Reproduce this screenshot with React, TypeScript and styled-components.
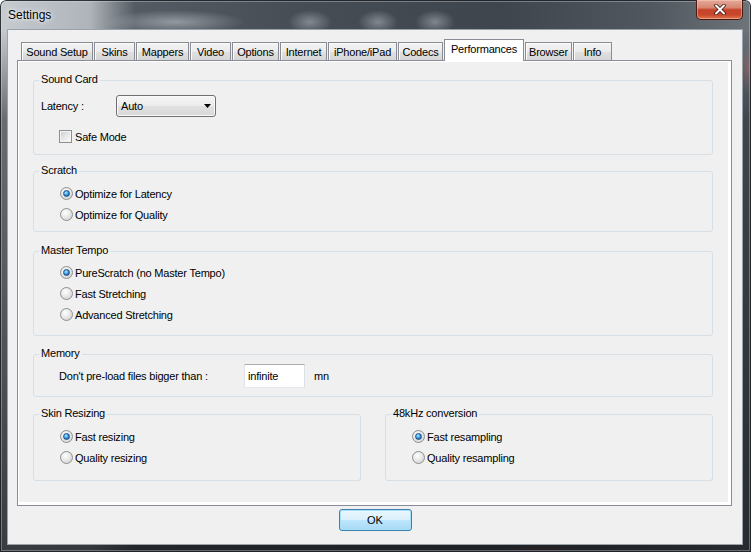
import styled, { createGlobalStyle } from "styled-components";

const GlobalStyle = createGlobalStyle`
  html, body {
    margin: 0;
    padding: 0;
  }
  body {
    width: 751px;
    height: 552px;
    overflow: hidden;
    font-family: "Liberation Sans", Arial, sans-serif;
  }
`;

const Window = styled.div`
  width: 751px;
  height: 552px;
  box-sizing: border-box;
  display: flex;
  flex-direction: column;
  border-radius: 6px 6px 0 0;
  box-shadow: inset 0 0 0 1px rgba(20, 24, 28, 0.85), inset 0 0 0 2px rgba(220, 226, 232, 0.35);
  background:
    linear-gradient(180deg, rgba(0, 0, 0, 0) 0px, rgba(0, 0, 0, 0) 30px, rgba(28, 32, 37, 0.55) 120px, rgba(22, 25, 29, 0.8) 100%),
    radial-gradient(ellipse 70px 12px at 175px 22px, rgba(200, 206, 212, 0.55), rgba(0, 0, 0, 0)),
    radial-gradient(ellipse 22px 12px at 310px 22px, rgba(190, 196, 204, 0.5), rgba(0, 0, 0, 0)),
    radial-gradient(ellipse 20px 12px at 378px 22px, rgba(190, 196, 204, 0.5), rgba(0, 0, 0, 0)),
    radial-gradient(ellipse 20px 12px at 435px 22px, rgba(190, 196, 204, 0.5), rgba(0, 0, 0, 0)),
    radial-gradient(ellipse 6px 24px at 748px 70px, rgba(200, 120, 120, 0.6), rgba(0, 0, 0, 0)),
    radial-gradient(ellipse 40px 5px at 540px 549px, rgba(160, 60, 60, 0.5), rgba(0, 0, 0, 0)),
    linear-gradient(90deg, #c6cbd0 0px, #aeb4ba 90px, #545b62 135px, #474d54 300px, #3f454c 500px, #50575e 650px, #6d747a 751px);
`;

const TitleBar = styled.div`
  height: 29px;
  flex: none;
  display: flex;
  align-items: flex-start;
  justify-content: space-between;
  padding: 0 8px;
`;

const Title = styled.span`
  margin-top: 8px;
  font-family: "Liberation Sans", Arial, sans-serif;
  font-size: 12px;
  line-height: 14px;
  color: #000;
  text-shadow: 0 0 6px rgba(255, 255, 255, 0.9), 0 0 3px rgba(255, 255, 255, 0.8);
`;

const CloseButton = styled.div`
  width: 47px;
  height: 20px;
  box-sizing: border-box;
  border: 1px solid #4a1a12;
  border-top: none;
  border-radius: 0 0 5px 5px;
  display: flex;
  align-items: center;
  justify-content: center;
  background: linear-gradient(180deg, #e3ab9c 0%, #d88670 40%, #c4432a 52%, #c9472c 78%, #e0794d 100%);
  box-shadow: inset 0 0 0 1px rgba(255, 210, 190, 0.45);
`;

const Client = styled.div`
  flex: 1;
  margin: 0 8px 7px 7px;
  box-sizing: border-box;
  border: 1px solid #9aa1a8;
  background: #f0f0f0;
  display: flex;
  flex-direction: column;
  padding-top: 9px;
  font-size: 11px;
  letter-spacing: -0.2px;
  color: #000;
`;

const TabRow = styled.div`
  height: 21px;
  display: flex;
  align-items: flex-end;
  margin-left: 13px;
`;

const Tab = styled.div<{ $w: number; $active?: boolean }>`
  width: ${(p) => p.$w}px;
  height: ${(p) => (p.$active ? 22 : 18)}px;
  margin-right: 1px;
  margin-bottom: ${(p) => (p.$active ? -1 : 0)}px;
  box-sizing: border-box;
  border: 1px solid #898c95;
  border-bottom: none;
  display: flex;
  align-items: center;
  justify-content: center;
  padding-bottom: ${(p) => (p.$active ? 3 : 0)}px;
  position: relative;
  z-index: ${(p) => (p.$active ? 1 : 0)};
  background: ${(p) =>
    p.$active
      ? "#ffffff"
      : "linear-gradient(180deg, #f3f3f3 0%, #ebebeb 50%, #e0e0e0 51%, #d6d6d6 100%)"};
  box-shadow: ${(p) => (p.$active ? "none" : "inset 1px 1px 0 #fbfbfb")};
  white-space: nowrap;
`;

const Panel = styled.div`
  width: 715px;
  height: 446px;
  margin-left: 9px;
  box-sizing: border-box;
  border: 1px solid #898c95;
  background: #f0f0f0;
  box-shadow: inset 1px 1px 0 #ffffff, inset -3px -3px 0 #ffffff;
  padding: 19px 18px 0 15px;
  display: flex;
  flex-direction: column;
`;

const Group = styled.div<{ $h: number; $mt?: number }>`
  height: ${(p) => p.$h}px;
  margin-top: ${(p) => p.$mt ?? 0}px;
  flex: none;
  box-sizing: border-box;
  border: 1px solid #d5dfe5;
  border-radius: 3px;
`;

const HalfGroup = styled(Group)`
  flex: 1;
`;

const Legend = styled.div`
  display: table;
  margin: -8px 0 0 5px;
  padding: 0 2px;
  background: #f0f0f0;
  line-height: 13px;
`;

const Body = styled.div<{ $mt: number; $pl: number }>`
  margin-top: ${(p) => p.$mt}px;
  padding-left: ${(p) => p.$pl}px;
  display: flex;
  flex-direction: column;
`;

const Row = styled.div`
  display: flex;
  align-items: center;
`;

const BottomRow = styled.div`
  display: flex;
  gap: 24px;
  margin-top: 17px;
`;

const FieldLabel = styled.span<{ $w: number }>`
  width: ${(p) => p.$w}px;
  flex: none;
`;

const ComboBox = styled.div`
  width: 100px;
  height: 22px;
  box-sizing: border-box;
  border: 1px solid #707070;
  border-radius: 3px;
  display: flex;
  align-items: center;
  justify-content: space-between;
  padding: 0 4px 0 4px;
  background: linear-gradient(180deg, #f6f6f6 0%, #ececec 50%, #e1e1e1 51%, #d8d8d8 100%);
  box-shadow: inset 0 0 0 1px #fafafa;
`;

const CheckRow = styled(Row)`
  margin-top: 13px;
  padding-left: 25px;
  gap: 3px;
`;

const CheckMark = styled.span`
  width: 13px;
  height: 13px;
  box-sizing: border-box;
  border: 1px solid #8e8f8f;
  background: linear-gradient(135deg, #c9cbce 0%, #e6e7e8 50%, #fbfbfb 100%);
  box-shadow: inset 0 0 0 1px #f4f4f4;
`;

const Option = styled.div`
  height: 21px;
  display: flex;
  align-items: center;
  gap: 2px;
`;

const RadioMark = styled.span<{ $checked?: boolean }>`
  width: 13px;
  height: 13px;
  box-sizing: border-box;
  border-radius: 50%;
  border: 1px solid #8e8f8f;
  background: radial-gradient(circle at 40% 35%, #ffffff 0%, #eeeeee 35%, #cbcbcb 100%);
  display: flex;
  align-items: center;
  justify-content: center;

  &::after {
    content: "";
    display: ${(p) => (p.$checked ? "block" : "none")};
    width: 7px;
    height: 7px;
    box-sizing: border-box;
    border-radius: 50%;
    border: 1px solid #1b4f85;
    background: radial-gradient(circle at 40% 35%, #c4ecff 0%, #4aa8e8 40%, #1464b0 80%, #0c4580 100%);
  }
`;

const TextBox = styled.input`
  width: 61px;
  height: 24px;
  box-sizing: border-box;
  margin: 0;
  padding: 0 3px;
  border: 1px solid;
  border-color: #abadb3 #dbdfe6 #e3e9ef #e2e3ea;
  background: #ffffff;
  font-family: "Liberation Sans", Arial, sans-serif;
  font-size: 11px;
  letter-spacing: -0.2px;
  color: #000;
  outline: none;
`;

const Unit = styled.span`
  margin-left: 9px;
`;

const Footer = styled.div`
  flex: 1;
  display: flex;
  justify-content: center;
  align-items: flex-start;
  padding-top: 3px;
`;

const OkButton = styled.button`
  width: 73px;
  height: 22px;
  box-sizing: border-box;
  margin: 0;
  padding: 0;
  border: 1px solid #3c7fb1;
  border-radius: 3px;
  font-family: "Liberation Sans", Arial, sans-serif;
  font-size: 11px;
  color: #000;
  background: linear-gradient(180deg, #eaf6fd 0%, #d9f0fc 50%, #bee6fd 51%, #a7d9f5 100%);
  box-shadow: inset 0 0 0 1px #a8e2f8;
`;

const tabs = [
  { label: "Sound Setup", w: 72 },
  { label: "Skins", w: 41 },
  { label: "Mappers", w: 53 },
  { label: "Video", w: 41 },
  { label: "Options", w: 47 },
  { label: "Internet", w: 47 },
  { label: "iPhone/iPad", w: 69 },
  { label: "Codecs", w: 45 },
  { label: "Performances", w: 80, active: true },
  { label: "Browser", w: 47 },
  { label: "Info", w: 39 },
];

function Radio(props: { label: string; checked?: boolean }) {
  return (
    <Option>
      <RadioMark $checked={props.checked} />
      <span>{props.label}</span>
    </Option>
  );
}

function CloseGlyph() {
  return (
    <svg width="12" height="11" viewBox="0 0 12 11">
      <path d="M2 1.5 L10 9.5 M10 1.5 L2 9.5" stroke="#3a1610" strokeWidth="3.6" strokeLinecap="round" />
      <path d="M2 1.5 L10 9.5 M10 1.5 L2 9.5" stroke="#ffffff" strokeWidth="2" strokeLinecap="round" />
    </svg>
  );
}

function App() {
  return (
    <>
      <GlobalStyle />
      <Window>
        <TitleBar>
          <Title>Settings</Title>
          <CloseButton>
            <CloseGlyph />
          </CloseButton>
        </TitleBar>
        <Client>
          <TabRow>
            {tabs.map((t) => (
              <Tab key={t.label} $w={t.w} $active={t.active}>
                {t.label}
              </Tab>
            ))}
          </TabRow>
          <Panel>
            <Group $h={75}>
              <Legend>Sound Card</Legend>
              <Body $mt={9} $pl={7}>
                <Row>
                  <FieldLabel $w={75}>Latency :</FieldLabel>
                  <ComboBox>
                    <span>Auto</span>
                    <svg width="7" height="4" viewBox="0 0 7 4">
                      <polygon points="0,0 7,0 3.5,4" fill="#000" />
                    </svg>
                  </ComboBox>
                </Row>
              </Body>
              <CheckRow>
                <CheckMark />
                <span>Safe Mode</span>
              </CheckRow>
            </Group>

            <Group $h={61} $mt={16}>
              <Legend>Scratch</Legend>
              <Body $mt={6} $pl={26}>
                <Radio label="Optimize for Latency" checked />
                <Radio label="Optimize for Quality" />
              </Body>
            </Group>

            <Group $h={85} $mt={19}>
              <Legend>Master Tempo</Legend>
              <Body $mt={5} $pl={26}>
                <Radio label="PureScratch (no Master Tempo)" checked />
                <Radio label="Fast Stretching" />
                <Radio label="Advanced Stretching" />
              </Body>
            </Group>

            <Group $h={43} $mt={18}>
              <Legend>Memory</Legend>
              <Body $mt={4} $pl={25}>
                <Row>
                  <FieldLabel $w={185}>Don't pre-load files bigger than :</FieldLabel>
                  <TextBox readOnly value="infinite" />
                  <Unit>mn</Unit>
                </Row>
              </Body>
            </Group>

            <BottomRow>
              <HalfGroup $h={67}>
                <Legend>Skin Resizing</Legend>
                <Body $mt={6} $pl={26}>
                  <Radio label="Fast resizing" checked />
                  <Radio label="Quality resizing" />
                </Body>
              </HalfGroup>
              <HalfGroup $h={67}>
                <Legend>48kHz conversion</Legend>
                <Body $mt={6} $pl={26}>
                  <Radio label="Fast resampling" checked />
                  <Radio label="Quality resampling" />
                </Body>
              </HalfGroup>
            </BottomRow>
          </Panel>
          <Footer>
            <OkButton>OK</OkButton>
          </Footer>
        </Client>
      </Window>
    </>
  );
}

export default App;
